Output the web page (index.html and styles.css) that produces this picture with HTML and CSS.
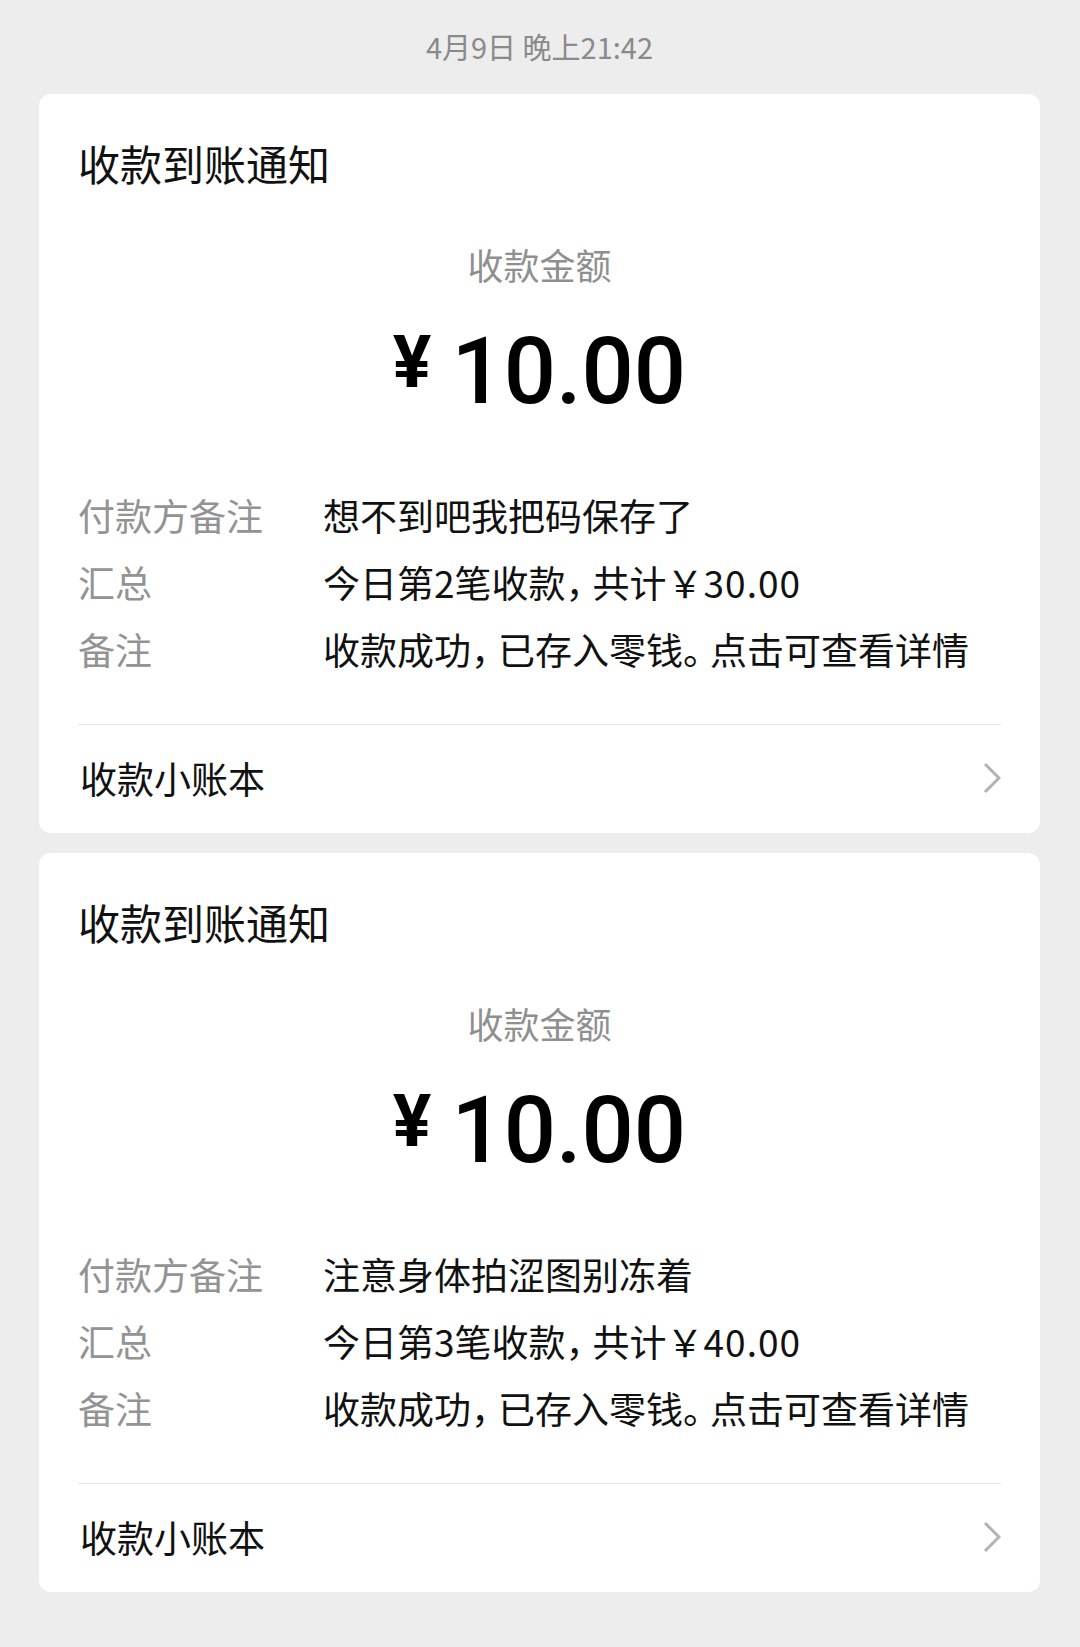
FILE: index.html
```html
<!DOCTYPE html>
<html lang="zh-CN">
<head>
    <meta charset="UTF-8">
    <meta name="viewport" content="width=device-width, initial-scale=1.0">
    <title>收款到账通知</title>
    <link rel="stylesheet" href="styles.css">
</head>
<body>
    <div class="time">4月9日 晚上21:42</div>

    <div class="card">
        <h2 class="title">收款到账通知</h2>
        <div class="amount-label">收款金额</div>
        <div class="amount"><span class="yen">¥</span>10.00</div>
        <div class="rows">
            <div class="label">付款方备注</div>
            <div class="value">想不到吧我把码保存了</div>
            <div class="label">汇总</div>
            <div class="value">今日第2笔收款<span class="punct">，</span>共计￥<span class="num">30.00</span></div>
            <div class="label">备注</div>
            <div class="value">收款成功<span class="punct">，</span>已存入零钱<span class="punct">。</span>点击可查看详情</div>
        </div>
        <div class="footer">
            <span>收款小账本</span>
            <svg class="arrow" width="18" height="32" viewBox="0 0 18 32">
                <polyline points="2,2 16,16 2,30" fill="none" stroke="#b2b2b2" stroke-width="3"/>
            </svg>
        </div>
    </div>

    <div class="card">
        <h2 class="title">收款到账通知</h2>
        <div class="amount-label">收款金额</div>
        <div class="amount"><span class="yen">¥</span>10.00</div>
        <div class="rows">
            <div class="label">付款方备注</div>
            <div class="value">注意身体拍涩图别冻着</div>
            <div class="label">汇总</div>
            <div class="value">今日第3笔收款<span class="punct">，</span>共计￥<span class="num">40.00</span></div>
            <div class="label">备注</div>
            <div class="value">收款成功<span class="punct">，</span>已存入零钱<span class="punct">。</span>点击可查看详情</div>
        </div>
        <div class="footer">
            <span>收款小账本</span>
            <svg class="arrow" width="18" height="32" viewBox="0 0 18 32">
                <polyline points="2,2 16,16 2,30" fill="none" stroke="#b2b2b2" stroke-width="3"/>
            </svg>
        </div>
    </div>
</body>
</html>
```

FILE: styles.css
```css
* {
    margin: 0;
    padding: 0;
    box-sizing: border-box;
}

body {
    background: #ededed;
    font-family: "Noto Sans CJK SC", "Noto Sans", sans-serif;
    color: #111;
    padding: 26px 40px 0 39px;
}

.time {
    text-align: center;
    font-size: 29px;
    line-height: 40px;
    color: #8a8a8a;
    margin-bottom: 28px;
}

.card {
    background: #fff;
    border-radius: 12px;
    padding: 0 39px;
    margin-bottom: 20px;
    height: 739px;
}

.title {
    font-size: 42px;
    font-weight: 400;
    line-height: 58px;
    padding-top: 40px;
}

.amount-label {
    text-align: center;
    font-size: 36px;
    line-height: 50px;
    color: #8f8f8f;
    margin-top: 47px;
}

.amount {
    text-align: center;
    font-family: Roboto, "Liberation Sans", sans-serif;
    font-size: 92px;
    font-weight: 500;
    line-height: 120px;
    height: 115px;
    margin-top: 23px;
    color: #000;
}

.yen {
    font-size: 72px;
    font-weight: 700;
    line-height: 1;
    margin-right: 20px;
    vertical-align: 16px;
}

.rows {
    display: grid;
    grid-template-columns: 245px 1fr;
    font-size: 37px;
    line-height: 67px;
    margin-top: 55px;
}

.label {
    color: #939393;
}

/* 标点收窄一点 */
.punct {
    letter-spacing: -0.27em;
}

.num {
    letter-spacing: 1px;
}

.footer {
    display: flex;
    justify-content: space-between;
    align-items: center;
    border-top: 1px solid #e5e5e5;
    margin-top: 41px;
    height: 106px;
    font-size: 37px;
    padding-left: 2px;
}

.arrow {
    display: block;
}
```
